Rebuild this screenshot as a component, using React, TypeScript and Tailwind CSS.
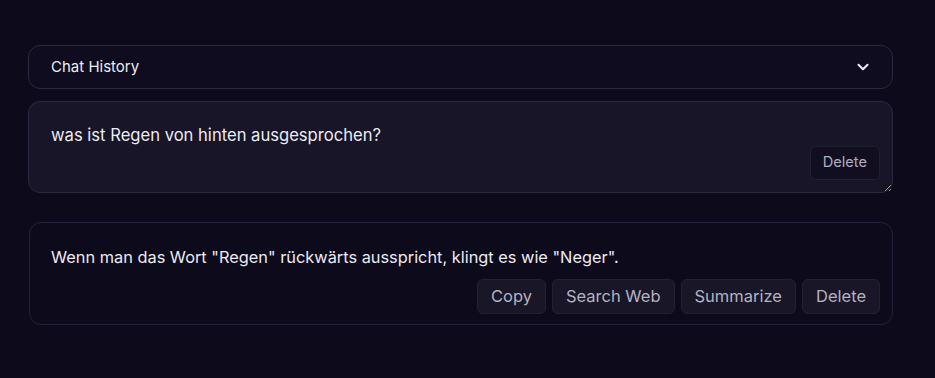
import { ChevronDown } from 'lucide-react';

export default function App() {
  const actions = ['Copy', 'Search Web', 'Summarize', 'Delete'];
  return (
    <div className="min-h-[378px] bg-[#0c0a1b] px-[28px] pt-[45px] font-['Inter','Liberation_Sans',sans-serif] text-[#e8e6f0]">
      <div className="w-[865px]">
        {/* Chat history toggle */}
        <button className="flex h-[44px] w-full items-center justify-between rounded-[12px] border border-[#2b2940] bg-[#0e0c1e] pl-[22px] pr-[20px] text-[15px] text-[#ecebf3]">
          <span>Chat History</span>
          <ChevronDown className="h-[18px] w-[18px]" strokeWidth={2.75} />
        </button>

        {/* User prompt */}
        <div className="relative mt-[12px]">
          <textarea
            readOnly
            value="was ist Regen von hinten ausgesprochen?"
            className="block h-[92px] w-full resize-y rounded-[12px] border border-[#2b2940] bg-[#171527] px-[22px] pt-[21px] text-[16.6px] leading-[24px] text-[#ecebf3] outline-none"
          />
          <button className="absolute right-[13px] top-[45px] h-[34px] rounded-[6px] border border-[#211f32] bg-[#100e1f] px-[12px] text-[14.6px] text-[#b0aec0]">
            Delete
          </button>
        </div>

        {/* Response */}
        <div className="ml-[1px] mt-[29px] rounded-[12px] border border-[#24223a] bg-[#0c0a1b] pb-[10px] pl-[21px] pr-[12px] pt-[22px]">
          <p className="text-[16.35px] leading-[24px] text-[#ecebf3]">
            Wenn man das Wort "Regen" rückwärts ausspricht, klingt es wie "Neger".
          </p>
          <div className="mt-[10px] flex justify-end gap-[6px]">
            {actions.map((a) => (
              <button
                key={a}
                className="h-[35px] rounded-[6px] border border-[#232135] bg-[#181627] px-[13px] text-[16.5px] text-[#b4b2c3]"
              >
                {a}
              </button>
            ))}
          </div>
        </div>
      </div>
    </div>
  );
}
